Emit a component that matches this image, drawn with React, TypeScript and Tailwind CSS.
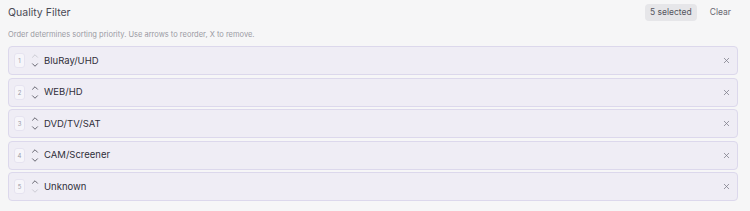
import { ChevronUp, ChevronDown, X } from "lucide-react";

const items = ["BluRay/UHD", "WEB/HD", "DVD/TV/SAT", "CAM/Screener", "Unknown"];

export default function App() {
  return (
    <div
      className="w-[750px] h-[211px] bg-[#f6f6f7] px-2 pt-[5px] text-[#3a3a44]"
      style={{ fontFamily: "Inter, 'Noto Sans', sans-serif" }}
    >
      {/* Header */}
      <div className="flex items-center justify-between h-[15px]">
        <span className="text-[10.5px] text-[#4a4a55]">Quality Filter</span>
        <div className="flex items-center gap-[13px] mr-[11px]">
          <span className="text-[8.5px] bg-[#e6e6e9] text-[#55555f] rounded px-[5px] py-[2px]">5 selected</span>
          <button className="text-[8.5px] text-[#66666f]">Clear</button>
        </div>
      </div>
      <p className="text-[7.5px] text-[#9a9aa3] mt-[9px]">
        Order determines sorting priority. Use arrows to reorder, X to remove.
      </p>

      {/* List */}
      <div className="flex flex-col gap-[2.5px] mt-[6px] w-[730px]">
        {items.map((item, i) => (
          <div
            key={item}
            className="flex items-center h-[29px] rounded-[4px] border border-[#dcd8ec] bg-[#efedf5] pl-[5px] pr-[6px]"
          >
            <span className="w-[11px] h-[15px] rounded-[3px] bg-[#f6f5fa] border border-[#e6e3f0] flex items-center justify-center text-[6px] text-[#9a9aa5]">
              {i + 1}
            </span>
            <div className="flex flex-col items-center ml-[5px] -space-y-[1px]">
              <ChevronUp
                size={10}
                strokeWidth={2}
                className={i === 0 ? "text-[#c4c4cc]" : "text-[#4a4a56]"}
              />
              <ChevronDown
                size={10}
                strokeWidth={2}
                className={i === items.length - 1 ? "text-[#c4c4cc]" : "text-[#4a4a56]"}
              />
            </div>
            <span className="ml-[4px] text-[9.5px] text-[#2f2f3a]">{item}</span>
            <X size={9} strokeWidth={2} className="ml-auto text-[#7a7a85]" />
          </div>
        ))}
      </div>
    </div>
  );
}
